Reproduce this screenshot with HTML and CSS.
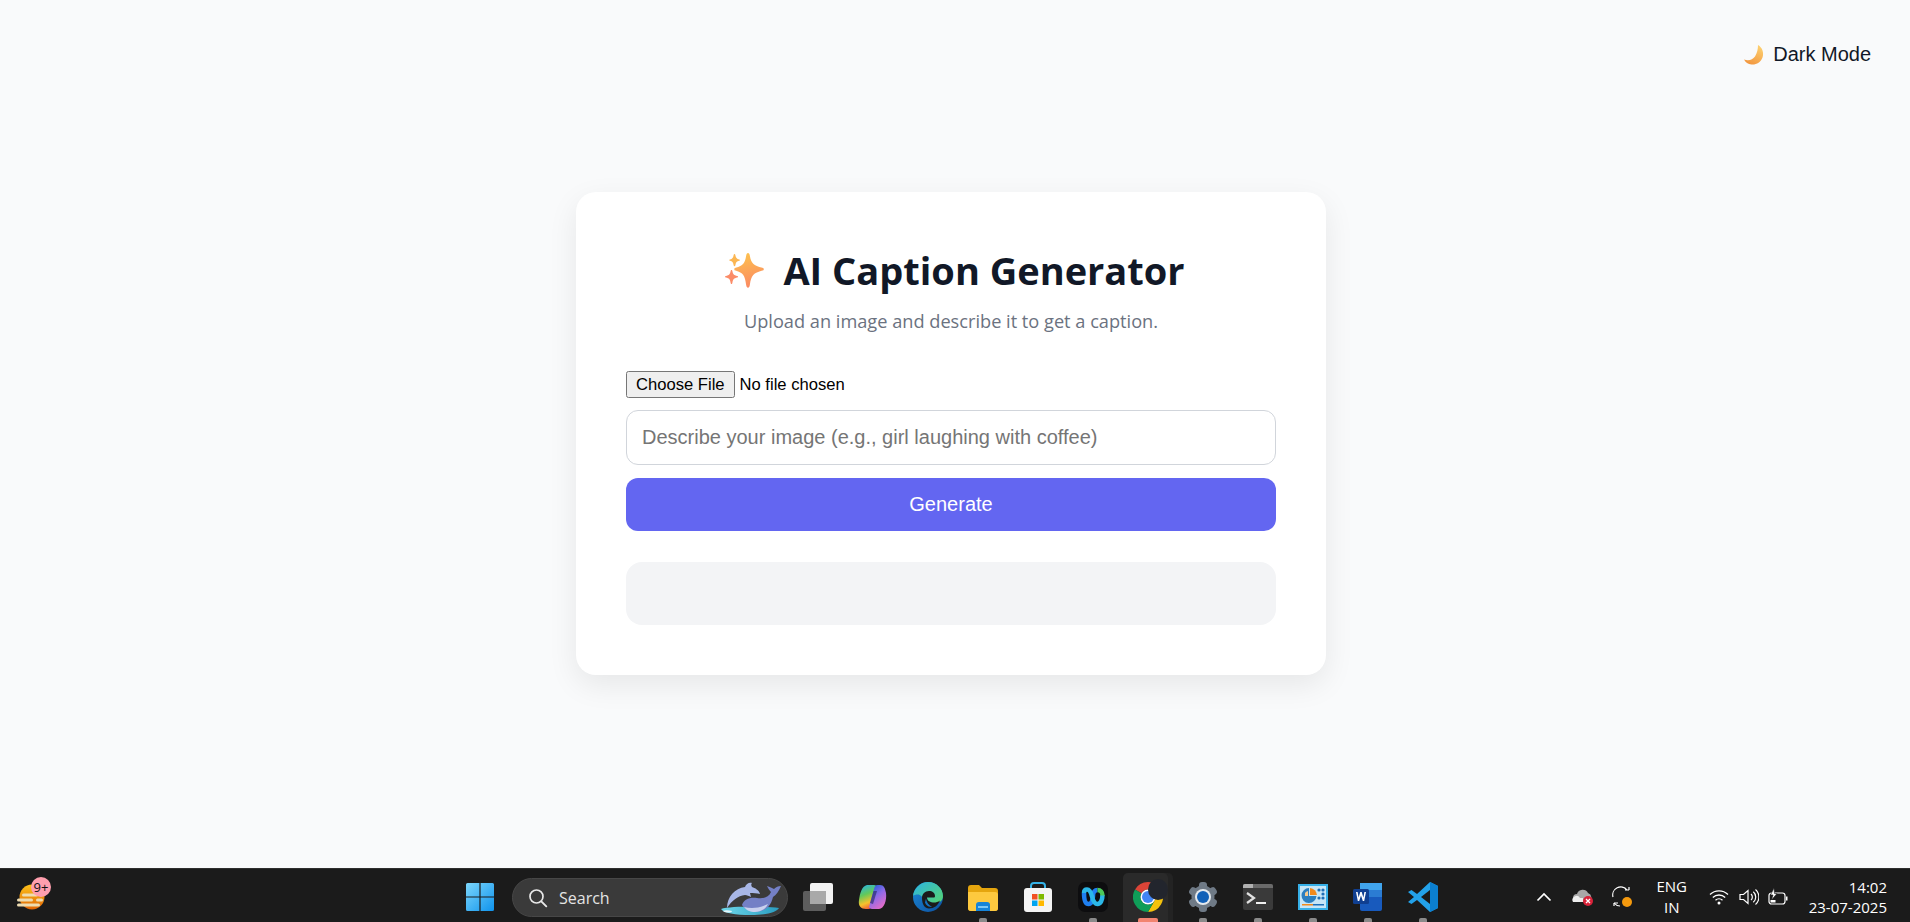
FILE: index.html
```html
<!DOCTYPE html>
<html lang="en">
<head>
<meta charset="utf-8">
<title>AI Caption Generator</title>
<link rel="stylesheet" href="styles.css">
</head>
<body>
<main class="stage">
  <button class="theme-toggle" type="button">
    <svg class="moon" viewBox="0 0 20 20" width="20" height="20"><defs><linearGradient id="mg" x1="0.8" y1="0" x2="0.3" y2="1"><stop offset="0" stop-color="#fdd272"/><stop offset="1" stop-color="#f2963f"/></linearGradient></defs><path d="M14 0c4.500 2.500 6 8 4.500 12.500C16.800 17.500 12 20 7.500 19.500 4 19 1.500 17.500 0 14.500c4.500 1.500 8.500.5 11-3C13.200 8 14 4 14 0z" fill="url(#mg)"/></svg>
    <span>Dark Mode</span>
  </button>
  <section class="card">
    <h1 class="title"><svg class="sparkles" viewBox="0 0 40 36" width="40" height="36"><defs><linearGradient id="sg" x1="0.2" y1="0" x2="0.4" y2="1"><stop offset="0" stop-color="#fdc34e"/><stop offset="1" stop-color="#fb8a62"/></linearGradient></defs><path d="M24 1c1 0 1.500.8 1.900 3 1.200 7 3.600 9.500 12.500 11.800.8.200 1.400.6 1.400 1.400s-.6 1.200-1.400 1.400c-8.900 2.300-11.300 5-12.500 14.200-.3 2-.9 3-1.900 3s-1.600-1-1.900-3c-1.200-9.200-2.800-11.900-10.500-14.200-.8-.2-1.300-.6-1.300-1.400s.5-1.200 1.300-1.400c7.700-2.300 9.300-4.800 10.500-11.800C22.500 1.800 23 1 24 1z" fill="url(#sg)"/><path d="M10.500 2c.5 0 .7.400.9 1.200.5 2.700 1.300 3.500 3.800 4.200.5.100.8.300.8.700s-.3.600-.8.700c-2.500.7-3.300 1.500-3.800 4.300-.2.800-.4 1.200-.9 1.200s-.7-.4-.9-1.200c-.5-2.800-1.200-3.600-3.600-4.300-.5-.1-.8-.3-.8-.7s.3-.6.800-.7c2.400-.7 3.100-1.500 3.600-4.200.2-.8.400-1.200.9-1.200z" fill="#fbb652"/><path d="M7.500 18c.5 0 .7.400.9 1.300.6 3 1.500 3.900 4.800 4.700.6.100.9.400.9.800s-.3.700-.9.800c-3.300.8-4.200 1.800-4.800 5.100-.2.900-.4 1.300-.9 1.300s-.7-.4-.9-1.300c-.6-3.300-1.400-4.300-4.700-5.100-.6-.1-.9-.4-.9-.8s.3-.7.900-.8c3.300-.8 4.100-1.700 4.700-4.700.2-.9.400-1.300.9-1.300z" fill="#fb8c68"/></svg>AI Caption Generator</h1>
    <p class="subtitle">Upload an image and describe it to get a caption.</p>
    <input class="file" type="file">
    <input class="prompt" type="text" placeholder="Describe your image (e.g., girl laughing with coffee)">
    <button class="generate" type="button">Generate</button>
    <div class="result"></div>
  </section>
</main>
<footer class="taskbar">
  <div class="weather">
    <svg viewBox="0 0 32 32" width="32" height="32"><defs><linearGradient id="wg" x1="0" y1="0" x2="0" y2="1"><stop offset="0" stop-color="#fdc21a"/><stop offset="1" stop-color="#e06505"/></linearGradient></defs><circle cx="16" cy="19" r="12.500" fill="url(#wg)"/><g fill="#eedcb0"><rect x="6" y="15.500" width="16" height="3" rx="1.500"/><rect x="1" y="20.500" width="16" height="3" rx="1.500"/><rect x="20" y="20.500" width="7" height="3" rx="1.500"/><rect x="1" y="25.500" width="23" height="3" rx="1.500"/></g></svg>
    <span class="badge">9+</span>
  </div>
  <div class="center">
    <span class="tile"><svg viewBox="0 0 30 30" width="30" height="30"><defs><linearGradient id="win" x1="0" y1="0" x2="1" y2="1"><stop offset="0" stop-color="#7cd6fb"/><stop offset="1" stop-color="#0f93ec"/></linearGradient></defs><path d="M1 2.500A1.500 1.500 0 0 1 2.500 1H14.400V14.400H1zM15.600 1H27.500A1.500 1.500 0 0 1 29 2.500V14.400H15.600zM1 15.600H14.400V29H2.500A1.500 1.500 0 0 1 1 27.500zM15.600 15.600H29V27.500A1.500 1.500 0 0 1 27.500 29H15.600z" fill="url(#win)"/></svg></span>
    <div class="search">
      <svg viewBox="0 0 20 20" width="20" height="20"><circle cx="8.500" cy="8.500" r="6.500" fill="none" stroke="#e8e8e8" stroke-width="1.700"/><path d="M13.300 13.300l5 5" stroke="#e8e8e8" stroke-width="1.900" stroke-linecap="round"/></svg>
      <span class="search-label">Search</span>
      <svg class="search-art" viewBox="0 0 60 38" width="60" height="38"><defs><linearGradient id="sea" x1="0" y1="0" x2="1" y2="0"><stop offset="0" stop-color="#6fd8ea"/><stop offset="1" stop-color="#2a9cc0"/></linearGradient></defs><path d="M0 30c10-3 45-3 58-1-2 4-12 7-28 7C14 36 3 34 0 30z" fill="url(#sea)"/><path d="M2 32c2-1 6-1 9 0 0 2-7 2-9 0z" fill="#e4f6fb"/><path d="M6 29c0-11 8-20 18-21 1-3 4-5 7-4-1 1-1 2 0 4 3 1 7 3 8 7-3-1-7-1-10-1l1 4c-2-1-4-2-6-2-7 1-13 5-18 13z" fill="#a7b6e6"/><path d="M21 26c2-6 8-8 15-7 7 1 12-1 14-6-2-2-3-4-4-6 3 1 5 2 7 3 2-2 4-3 7-3-2 5-5 9-8 11-2 8-6 13-12 14-3 1-5 1-7 0-5-1-10-2-12-6z" fill="#7480c6"/><path d="M23 28c8 2 16 1 24-3-3 6-8 8-13 8-5 0-9-2-11-5z" fill="#c9d0ee"/></svg>
    </div>
    <span class="tile"><svg viewBox="0 0 30 28" width="30" height="28"><rect x="0" y="8" width="23" height="20" rx="2" fill="#5d5d5d"/><rect x="7" y="0" width="23" height="21" rx="2" fill="#f2f2f2"/><rect x="7" y="8" width="16" height="13" fill="#a9a9a9"/></svg></span>
    <span class="tile"><svg viewBox="0 0 30 28" width="30" height="28"><defs><linearGradient id="c1" x1="0.2" y1="0" x2="0.8" y2="1"><stop offset="0" stop-color="#1e5fd8"/><stop offset=".45" stop-color="#8e6ae8"/><stop offset="1" stop-color="#ef6cc4"/></linearGradient><linearGradient id="c2" x1="0.2" y1="0" x2="0.5" y2="1"><stop offset="0" stop-color="#2ab5e0"/><stop offset=".4" stop-color="#62c95a"/><stop offset=".75" stop-color="#f6c22c"/><stop offset="1" stop-color="#f0603c"/></linearGradient></defs><path d="M9 2h7c1.500 0 2.500.8 3 2L14 22c-.5 2-1.500 4-3.500 4H8C3 26 0 23 1 17 2 10 4 3 9 2z" fill="url(#c2)"/><path d="M21 26h-7c-1.500 0-2.500-.8-3-2l5-18c.5-2 1.500-4 3.500-4H22c4 0 5 3 6 8 1 7-2 16-7 16z" fill="url(#c1)"/><path d="M15.500 8 12 20l3 1 4-13z" fill="#2a2a6a" opacity=".65"/></svg></span>
    <span class="tile"><svg viewBox="0 0 30 30" width="30" height="30"><defs><linearGradient id="e1" x1="0" y1="0" x2="1" y2=".8"><stop offset="0" stop-color="#2cb4e4"/><stop offset="1" stop-color="#52d27a"/></linearGradient><linearGradient id="e2" x1="0" y1="0" x2="1" y2="1"><stop offset="0" stop-color="#1c8ad8"/><stop offset="1" stop-color="#0c4f9e"/></linearGradient></defs><circle cx="15" cy="15" r="15" fill="url(#e2)"/><path d="M0 14C1 6 8 0 15 0c9 0 15 7 15 14 0 5-4 7-8 7-2 0-4-.5-5-1.500H10c.5-5-3-7-5-7-2.500 0-4 .5-5 1.500z" fill="url(#e1)"/><path d="M9 16c0-4 3-7 7-7 3.500 0 6 2 6 5 0 1-.5 1.500-1.500 1.500H14c0 3 3 5 7 5 2 0 4-.5 6-2-2 5-6 8-11 8-4 0-7-4-7-10.500z" fill="#1b1b1b"/><path d="M13 16.500c.5 4 3 7 6 8-3 1-6-1-7-4z" fill="#1273c4"/></svg></span>
    <span class="tile running"><svg viewBox="0 0 30 28" width="30" height="28"><path d="M0 5a3 3 0 0 1 3-3h8l3 3h13a3 3 0 0 1 3 3v17a3 3 0 0 1-3 3H3a3 3 0 0 1-3-3z" fill="#e5a50e"/><path d="M0 9h27a3 3 0 0 1 3 3v13a3 3 0 0 1-3 3H3a3 3 0 0 1-3-3z" fill="#fdc93f"/><path d="M8 28v-6a3 3 0 0 1 3-3h8a3 3 0 0 1 3 3v6z" fill="#1584d8"/><rect x="10" y="23" width="10" height="2" fill="#7cc7f5"/></svg></span>
    <span class="tile"><svg viewBox="0 0 30 30" width="30" height="30"><path d="M8 8V4a3 3 0 0 1 3-3h8a3 3 0 0 1 3 3v4" fill="none" stroke="#35b3e8" stroke-width="2"/><rect x="1" y="6" width="28" height="24" rx="3" fill="#f4f4f4"/><rect x="9" y="12" width="5.500" height="5.500" fill="#f25022"/><rect x="15.500" y="12" width="5.500" height="5.500" fill="#7fba00"/><rect x="9" y="18.500" width="5.500" height="5.500" fill="#00a4ef"/><rect x="15.500" y="18.500" width="5.500" height="5.500" fill="#ffb900"/></svg></span>
    <span class="tile running"><svg viewBox="0 0 30 30" width="30" height="30"><rect width="30" height="30" rx="7" fill="#0d0d0f"/><path d="M6 11c0 7 1.500 11 4.500 11s4.500-4 4.500-8c0-4 2-6 4.500-6" fill="none" stroke="#1f7ff0" stroke-width="4.500"/><path d="M6 11c0-2.500 1-3.500 3-3.500 3 0 4 3 5 7 1 4 2.500 7.500 5.500 7.500 3 0 5-4 5-9" fill="none" stroke="#2bb7e8" stroke-width="4.500"/><path d="M19.500 8c3 0 5 2 5 5.500" fill="none" stroke="#4cc85a" stroke-width="4.500"/></svg></span>
    <span class="tile tile-active"><svg viewBox="0 0 30 30" width="30" height="30"><path d="M15 0A15 15 0 0 1 28 7.500H15A7.500 7.500 0 0 0 8.500 11.250L2 7.500A15 15 0 0 1 15 0z" fill="#db4437"/><path d="M28 7.500A15 15 0 0 1 15 30L21.500 18.750A7.500 7.500 0 0 0 15 7.500z" fill="#f4c20d"/><path d="M2 7.500A15 15 0 0 0 15 30L21.500 18.750A7.500 7.500 0 0 1 8.500 11.250z" fill="#0f9d58"/><circle cx="15" cy="15" r="7.500" fill="#fff"/><circle cx="15" cy="15" r="6" fill="#4285f4"/></svg><span class="blob"></span></span>
    <span class="tile running"><svg viewBox="0 0 30 30" width="30" height="30"><g fill="#6f7a86"><circle cx="15" cy="15" r="11.500"/><rect x="11" y="0" width="8" height="30" rx="3"/><rect x="11" y="0" width="8" height="30" rx="3" transform="rotate(60 15 15)"/><rect x="11" y="0" width="8" height="30" rx="3" transform="rotate(120 15 15)"/></g><circle cx="15" cy="15" r="8" fill="#e4e9ee"/><circle cx="15" cy="15" r="6" fill="#1261b8"/></svg></span>
    <span class="tile running"><svg viewBox="0 0 30 26" width="30" height="26"><rect width="30" height="26" rx="2" fill="#3a3a3a"/><path d="M2 0h26a2 2 0 0 1 2 2v2H0V2a2 2 0 0 1 2-2z" fill="#6a6a6a"/><path d="M2 0h8v4H0V2a2 2 0 0 1 2-2z" fill="#b0b0b0"/><path d="M4 9l7 5-7 5" fill="none" stroke="#e0e0e0" stroke-width="2.200"/><rect x="13" y="18" width="10" height="2" fill="#f0f0f0"/></svg></span>
    <span class="tile running"><svg viewBox="0 0 30 26" width="30" height="26"><rect width="30" height="26" fill="#36b0e8"/><rect x="2" y="2" width="26" height="22" fill="#c6e6f7"/><path d="M11 12V4a7.500 7.500 0 1 0 7.500 8z" fill="#2a7fc0"/><path d="M12 11V4a7.500 7.500 0 0 1 7 7z" fill="#f08a1d"/><path d="M7 9a4.500 4.500 0 0 1 3-2v5H7z" fill="#f6c98a"/><g fill="#1e6fb8"><circle cx="21" cy="6" r="1.600"/><circle cx="25" cy="6" r="1.600"/><circle cx="25" cy="10" r="1.600"/><circle cx="25" cy="14" r="1.600"/><circle cx="21" cy="14" r="1.600"/></g><rect x="4" y="20" width="11" height="1.500" fill="#f08a1d"/><rect x="15" y="20" width="11" height="1.500" fill="#1e6fb8"/></svg></span>
    <span class="tile running"><svg viewBox="0 0 30 30" width="30" height="30"><rect x="7" y="1" width="22" height="28" rx="2" fill="#185abd"/><rect x="7" y="1" width="22" height="7" fill="#41a5ee"/><rect x="7" y="8" width="22" height="7" fill="#2b7cd3"/><rect x="0" y="7" width="16" height="15" rx="1.500" fill="#103f91"/><path d="M3 10l1.800 9h1.400l1.800-5.500L9.800 19h1.400L13 10h-1.600l-1 5.500L8.700 10H7.300l-1.700 5.500L4.600 10z" fill="#fff"/></svg></span>
    <span class="tile running"><svg viewBox="0 0 30 30" width="30" height="30"><path d="M22 0l8 4v22l-8 4L9 18l-5.500 4L0 20l6-5-6-5 3.500-2L9 12z" fill="#23a2ea"/><path d="M22 8v14l-9-7z" fill="#1b1b1b"/><path d="M22 0l8 4v22l-8 4z" fill="#0b7fd0"/></svg></span>
  </div>
  <div class="tray">
    <svg class="tray-chevron" viewBox="0 0 16 10" width="16" height="10"><path d="M1.500 8.500 8 2l6.500 6.500" fill="none" stroke="#fff" stroke-width="1.700"/></svg>
    <svg class="tray-cloud" viewBox="0 0 22 18" width="22" height="18"><path d="M5 14a4 4 0 0 1 0-8 6 6 0 0 1 11-1 5 5 0 0 1 1 9z" fill="#a8a8a8"/><path d="M1 14a4 4 0 0 1 7-4h3v4z" fill="#eee"/><circle cx="16" cy="13" r="5" fill="#d9233a"/><path d="M14 11l4 4m0-4-4 4" stroke="#fff" stroke-width="1.300"/></svg>
    <svg class="tray-sync" viewBox="0 0 22 22" width="22" height="22"><path d="M1 11A8 8 0 0 1 15 4M17 4h-4M17 4V1M2 17h4M2 17v3" fill="none" stroke="#fff" stroke-width="1.200"/><path d="M2 17a8 8 0 0 0 6 3" fill="none" stroke="#fff" stroke-width="1.200"/><circle cx="15" cy="16" r="5" fill="#f59a0e"/></svg>
    <div class="lang"><span>ENG</span><span>IN</span></div>
    <svg class="tray-wifi" viewBox="0 0 20 16" width="20" height="16"><path d="M1 5.500a13 13 0 0 1 18 0M3.800 8.500a9 9 0 0 1 12.400 0M6.500 11.300a5 5 0 0 1 7 0" fill="none" stroke="#fff" stroke-width="1.300"/><circle cx="10" cy="14" r="1.500" fill="#fff"/></svg>
    <svg class="tray-volume" viewBox="0 0 20 18" width="20" height="18"><path d="M1 6.500h3.500L9 2.500v13l-4.500-4H1z" fill="none" stroke="#fff" stroke-width="1.200"/><path d="M12 6a4 4 0 0 1 0 6M14.300 3.700a7 7 0 0 1 0 10.600M16.500 1.500a10 10 0 0 1 0 15" fill="none" stroke="#fff" stroke-width="1.200"/></svg>
    <svg class="tray-battery" viewBox="0 0 20 18" width="20" height="18"><rect x="1" y="5" width="16" height="11" rx="2.500" fill="none" stroke="#fff" stroke-width="1.200"/><rect x="18" y="8.500" width="1.500" height="4" fill="#fff"/><path d="M6 0 2.500 7H5l-1.500 5L9 5.500H6.500z" fill="#fff" stroke="#1b1b1b" stroke-width=".6"/><rect x="2.500" y="12" width="5" height="2.500" fill="#fff"/></svg>
    <div class="clock"><span>14:02</span><span>23-07-2025</span></div>
  </div>
</footer>
</body>
</html>
```

FILE: styles.css
```css
* { box-sizing: border-box; }
html, body { height: 100%; }
body {
  margin: 0;
  display: flex;
  flex-direction: column;
  height: 922px;
  overflow: hidden;
  background: #f9fafb;
  font-family: "Liberation Sans", Arial, sans-serif;
}
.stage {
  position: relative;
  flex: 1;
  display: flex;
  align-items: center;
  justify-content: center;
  padding: 0 8px 1px 0;
}
.theme-toggle {
  position: absolute;
  top: 43px;
  right: 39px;
  display: flex;
  align-items: center;
  gap: 9px;
  padding: 0;
  border: 0;
  background: none;
  color: #111827;
  font: 20px "Liberation Sans", Arial, sans-serif;
}
.card {
  width: 750px;
  padding: 55px 50px 50px;
  display: flex;
  flex-direction: column;
  background: #fff;
  border-radius: 20px;
  box-shadow: 0 10px 30px rgba(0, 0, 0, 0.08);
}
.title {
  margin: 0;
  padding-left: 7px;
  display: flex;
  align-items: center;
  justify-content: center;
  gap: 19px;
  height: 46px;
  font: 700 38px/46px "Open Sans", sans-serif;
  color: #111827;
}
.subtitle {
  margin: 15px 0 0;
  text-align: center;
  font: 18.200px/27px "Open Sans", sans-serif;
  color: #6b7280;
}
.file {
  margin-top: 36px;
  height: 27px;
  font: 16.600px "Liberation Sans", Arial, sans-serif;
  color: #000;
}
.file::file-selector-button {
  height: 27px;
  padding: 0 8px;
  margin-right: 5px;
}
.prompt {
  margin-top: 12px;
  height: 55px;
  padding: 0 15px;
  border: 1.500px solid #d1d5db;
  border-radius: 12px;
  background: #fff;
  font: 20px "Liberation Sans", Arial, sans-serif;
}
.prompt::placeholder { color: #757575; opacity: 1; }
.generate {
  margin-top: 13px;
  height: 53px;
  border: 0;
  border-radius: 12px;
  background: #6366f1;
  color: #fff;
  font: 20px "Liberation Sans", Arial, sans-serif;
}
.result {
  margin-top: 31px;
  height: 63px;
  border-radius: 16px;
  background: #f3f4f6;
}
.taskbar {
  position: relative;
  flex: 0 0 54px;
  display: flex;
  align-items: stretch;
  background: #1b1b1b;
  border-top: 1px solid #2e2e2e;
  color: #fff;
  font-family: "Open Sans", sans-serif;
}
.weather {
  position: absolute;
  left: 16px;
  top: 9px;
  width: 40px;
}
.badge {
  position: absolute;
  left: 15px;
  top: -1px;
  width: 20px;
  height: 20px;
  border-radius: 50%;
  background: #ff9fae;
  color: #111;
  font-size: 13px;
  line-height: 20px;
  text-align: center;
}
.center {
  margin-left: 452px;
  padding-top: 2px;
  display: flex;
  align-items: stretch;
}
.tile {
  position: relative;
  width: 55px;
  display: flex;
  align-items: center;
  justify-content: center;
}
.running::after {
  content: "";
  position: absolute;
  bottom: 0;
  left: 23.500px;
  width: 8px;
  height: 4px;
  border-radius: 2px 2px 0 0;
  background: #8a8a8a;
}
.tile-active::before {
  content: "";
  position: absolute;
  left: 2.500px;
  top: 2px;
  right: 7.500px;
  bottom: 0;
  border-radius: 5px 5px 0 0;
  background: #2a2a2a;
  box-shadow: 5px 0 0 #232323;
}
.tile-active svg { position: relative; }
.tile-active::after {
  content: "";
  position: absolute;
  bottom: 0;
  left: 17.500px;
  width: 20px;
  height: 4px;
  border-radius: 2px 2px 0 0;
  background: #f28470;
}
.blob {
  position: absolute;
  left: 28px;
  top: 8px;
  width: 20px;
  height: 21px;
  border-radius: 50%;
  background: #22252d;
}
.search {
  width: 276px;
  height: 39px;
  margin: 7px 2px 0 5px;
  padding: 0 6px 0 15px;
  display: flex;
  align-items: center;
  gap: 11px;
  background: #3a3a3a;
  border: 1px solid #474747;
  border-radius: 20px;
  color: #e4e4e4;
  font-size: 16px;
}
.search-art { margin-left: auto; }
.tray {
  margin-left: auto;
  display: flex;
  align-items: center;
  padding: 2px 23px 0 0;
  font-size: 15px;
}
.tray-chevron { margin-right: 20px; }
.tray-cloud { margin-right: 18px; }
.tray-sync { margin-right: 13px; }
.lang { width: 50px; display: flex; flex-direction: column; align-items: center; line-height: 21px; margin-right: 12px; }
.tray-wifi { margin-right: 10px; }
.tray-volume { margin-right: 9px; }
.tray-battery { margin-right: 21px; }
.clock { display: flex; flex-direction: column; align-items: flex-end; line-height: 20px; }
```
